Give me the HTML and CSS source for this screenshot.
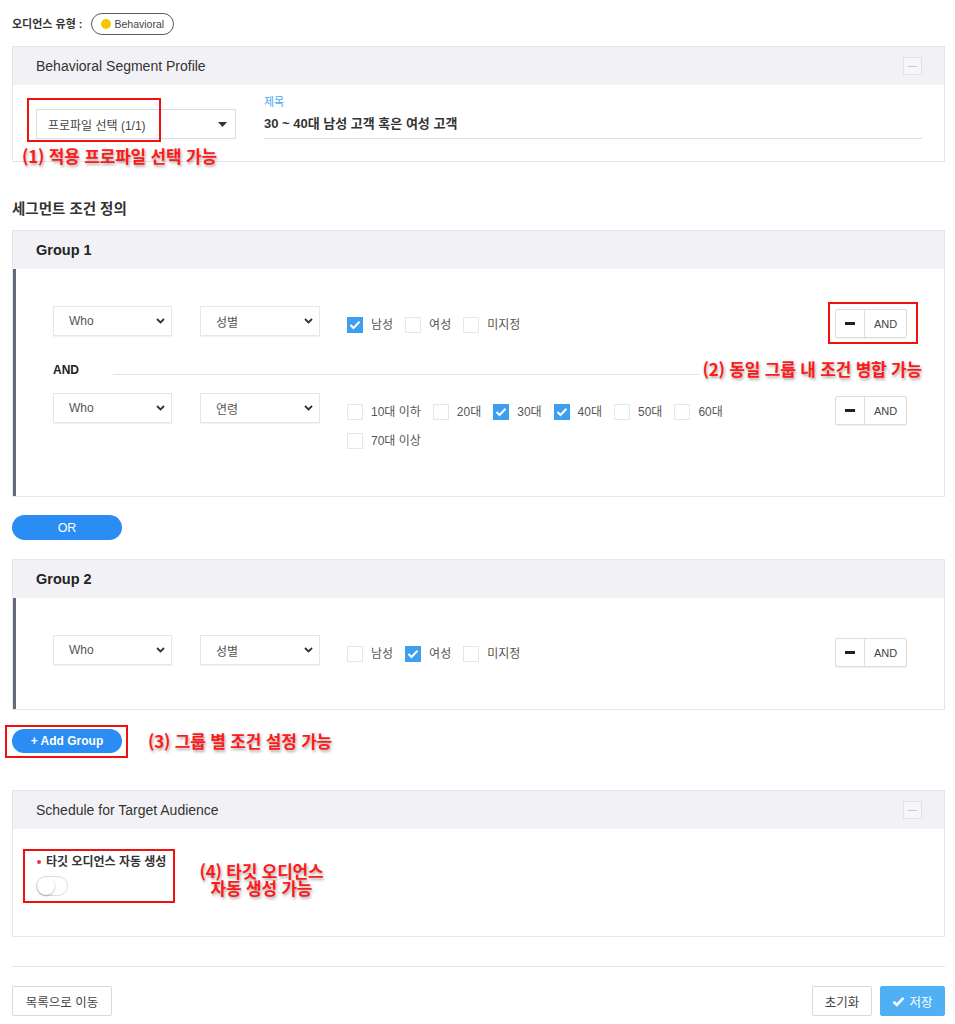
FILE: index.html
```html
<!DOCTYPE html>
<html lang="ko">
<head>
<meta charset="utf-8">
<title>Behavioral Segment</title>
<link rel="stylesheet" href="styles.css">
</head>
<body>
<div class="page">
  <div class="type-row">
    <span class="type-label">오디언스 유형 :</span>
    <span class="badge"><span class="badge-dot"></span>Behavioral</span>
  </div>

  <section class="card profile-card">
    <header class="card-head">
      <span class="card-title">Behavioral Segment Profile</span>
      <span class="collapse-btn"><span class="collapse-line"></span></span>
    </header>
    <div class="profile-body">
      <div class="profile-select">
        <span>프로파일 선택 (1/1)</span>
        <svg class="caret" width="9" height="5" viewBox="0 0 9 5"><path d="M0 0h9L4.5 5z" fill="#333"/></svg>
        <span class="hl hl-profile"></span>
      </div>
      <div class="title-field">
        <div class="field-label">제목</div>
        <div class="field-value">30 ~ 40대 남성 고객 혹은 여성 고객</div>
      </div>
      <div class="note note-1">(1) 적용 프로파일 선택 가능</div>
    </div>
  </section>

  <h2 class="section-title">세그먼트 조건 정의</h2>

  <section class="card group-card">
    <header class="card-head"><span class="group-title">Group 1</span></header>
    <div class="group-body">
      <div class="cond-row">
        <div class="sel sel-a"><span>Who</span><svg class="chev" width="9" height="6" viewBox="0 0 9 6"><path d="M1 1l3.5 3.5L8 1" fill="none" stroke="#333" stroke-width="1.8"/></svg></div>
        <div class="sel sel-b"><span>성별</span><svg class="chev" width="9" height="6" viewBox="0 0 9 6"><path d="M1 1l3.5 3.5L8 1" fill="none" stroke="#333" stroke-width="1.8"/></svg></div>
        <div class="checks">
          <span class="chk"><span class="box on"><svg width="12" height="10" viewBox="0 0 12 10"><path d="M1.5 5l3 3L10.5 1.8" fill="none" stroke="#fff" stroke-width="2"/></svg></span>남성</span>
          <span class="chk"><span class="box"></span>여성</span>
          <span class="chk"><span class="box"></span>미지정</span>
        </div>
        <div class="and-wrap">
          <div class="and-btn"><span class="and-minus"><i></i></span><span class="and-text">AND</span></div>
          <span class="hl hl-and"></span>
        </div>
      </div>
      <div class="and-sep"><span class="and-label">AND</span><span class="sep-line"></span></div>
      <div class="cond-row">
        <div class="sel sel-a"><span>Who</span><svg class="chev" width="9" height="6" viewBox="0 0 9 6"><path d="M1 1l3.5 3.5L8 1" fill="none" stroke="#333" stroke-width="1.8"/></svg></div>
        <div class="sel sel-b"><span>연령</span><svg class="chev" width="9" height="6" viewBox="0 0 9 6"><path d="M1 1l3.5 3.5L8 1" fill="none" stroke="#333" stroke-width="1.8"/></svg></div>
        <div class="checks">
          <span class="chk"><span class="box"></span>10대 이하</span>
          <span class="chk"><span class="box"></span>20대</span>
          <span class="chk"><span class="box on"><svg width="12" height="10" viewBox="0 0 12 10"><path d="M1.5 5l3 3L10.5 1.8" fill="none" stroke="#fff" stroke-width="2"/></svg></span>30대</span>
          <span class="chk"><span class="box on"><svg width="12" height="10" viewBox="0 0 12 10"><path d="M1.5 5l3 3L10.5 1.8" fill="none" stroke="#fff" stroke-width="2"/></svg></span>40대</span>
          <span class="chk"><span class="box"></span>50대</span>
          <span class="chk"><span class="box"></span>60대</span>
          <span class="chk"><span class="box"></span>70대 이상</span>
        </div>
        <div class="and-wrap">
          <div class="and-btn"><span class="and-minus"><i></i></span><span class="and-text">AND</span></div>
        </div>
      </div>
      <div class="note note-2">(2) 동일 그룹 내 조건 병합 가능</div>
    </div>
  </section>

  <div class="or-btn">OR</div>

  <section class="card group-card">
    <header class="card-head"><span class="group-title">Group 2</span></header>
    <div class="group-body group-body-2">
      <div class="cond-row">
        <div class="sel sel-a"><span>Who</span><svg class="chev" width="9" height="6" viewBox="0 0 9 6"><path d="M1 1l3.5 3.5L8 1" fill="none" stroke="#333" stroke-width="1.8"/></svg></div>
        <div class="sel sel-b"><span>성별</span><svg class="chev" width="9" height="6" viewBox="0 0 9 6"><path d="M1 1l3.5 3.5L8 1" fill="none" stroke="#333" stroke-width="1.8"/></svg></div>
        <div class="checks">
          <span class="chk"><span class="box"></span>남성</span>
          <span class="chk"><span class="box on"><svg width="12" height="10" viewBox="0 0 12 10"><path d="M1.5 5l3 3L10.5 1.8" fill="none" stroke="#fff" stroke-width="2"/></svg></span>여성</span>
          <span class="chk"><span class="box"></span>미지정</span>
        </div>
        <div class="and-wrap">
          <div class="and-btn"><span class="and-minus"><i></i></span><span class="and-text">AND</span></div>
        </div>
      </div>
    </div>
  </section>

  <div class="add-row">
    <div class="add-wrap">
      <div class="add-btn">+ Add Group</div>
      <span class="hl hl-add"></span>
    </div>
    <div class="note note-3">(3) 그룹 별 조건 설정 가능</div>
  </div>

  <section class="card sched-card">
    <header class="card-head">
      <span class="card-title">Schedule for Target Audience</span>
      <span class="collapse-btn"><span class="collapse-line"></span></span>
    </header>
    <div class="sched-body">
      <div class="auto-wrap">
        <div class="auto-label"><span class="req-dot"></span>타깃 오디언스 자동 생성</div>
        <div class="toggle"><span class="knob"></span></div>
        <span class="hl hl-auto"></span>
      </div>
      <div class="note note-4">(4) 타깃 오디언스<br>자동 생성 가능</div>
    </div>
  </section>

  <footer class="footer">
    <div class="btn btn-list">목록으로 이동</div>
    <div class="footer-right">
      <div class="btn btn-reset">초기화</div>
      <div class="btn btn-save"><svg width="13" height="11" viewBox="0 0 13 11"><path d="M1.5 5.8l3.4 3.2L11.5 1.8" fill="none" stroke="#fff" stroke-width="2.6"/></svg>저장</div>
    </div>
  </footer>
</div>
</body>
</html>
```

FILE: styles.css
```css
* { box-sizing: border-box; }
html, body { margin: 0; padding: 0; background: #fff; }
body {
  font-family: "Liberation Sans", "Noto Sans CJK KR", sans-serif;
  color: #333;
}
.page { width: 955px; padding: 13px 10px 0 12px; }

/* type row */
.type-row { display: flex; align-items: center; height: 22px; gap: 8px; }
.type-label { font-size: 11px; font-weight: bold; color: #333; line-height: 14px; }
.badge {
  display: flex; align-items: center; gap: 4px;
  width: 83px; height: 22px; padding-left: 9px;
  border: 1px solid #5a5a5a; border-radius: 11px;
  font-size: 10.5px; color: #444;
}
.badge-dot { width: 10px; height: 10px; border-radius: 50%; background: #f7c800; }

/* cards */
.card { border: 1px solid #e6e6ea; background: #fff; }
.profile-card { margin-top: 11px; }
.card-head {
  height: 38px; background: #f2f2f6;
  display: flex; align-items: center; justify-content: space-between;
  padding: 0 22px 0 23px;
}
.card-title { font-size: 14px; color: #333; }
.collapse-btn {
  width: 19px; height: 18px; border: 1px solid #e2e2e6; background: #f7f7f9;
  display: flex; align-items: center; justify-content: center;
}
.collapse-line { width: 9px; height: 1px; background: #c9c9cd; }

/* profile */
.profile-body {
  position: relative;
  display: flex; align-items: flex-start; gap: 28px;
  padding: 10px 22px 22px 23px;
}
.profile-select {
  position: relative;
  width: 200px; height: 30px; margin-top: 14px;
  border: 1px solid #dcdcdc;
  display: flex; align-items: center; justify-content: space-between;
  padding: 0 8px 0 11px;
  font-size: 12px; color: #444;
}
.title-field { flex: 1; }
.field-label { font-size: 11px; color: #4ea8ef; line-height: 14px; }
.field-value {
  height: 30px; line-height: 29px;
  font-size: 13px; font-weight: bold; color: #333;
  border-bottom: 1px solid #e0e0e0;
}

/* highlight boxes */
.hl { position: absolute; border: 2px solid #f01010; pointer-events: none; }
.hl-profile { left: -10px; top: -12px; width: 134px; height: 44px; }
.hl-and { left: -7px; top: -7px; width: 90px; height: 42px; }
.hl-add { left: -7px; top: -4px; width: 123px; height: 33px; }
.hl-auto { left: -13px; top: -6px; width: 152px; height: 54px; }

/* annotations */
.note {
  color: #ff1a1a;
  font-family: "Noto Sans CJK KR", sans-serif;
  font-size: 17px; font-weight: bold; line-height: 20px;
  letter-spacing: -0.2px;
  text-shadow: 1px 2px 3px rgba(0, 0, 0, 0.35);
  white-space: nowrap;
}
.note-1 { position: absolute; left: 9px; top: 61px; }
.note-2 { position: absolute; right: 22px; top: 90px; background: #fff; padding-left: 3px; }
.note-3 { margin-left: 26px; }
.note-4 { margin-left: 33px; margin-top: 7px; text-align: center; line-height: 17px; }

/* section title */
.section-title {
  margin: 37px 0 11px; font-size: 14.5px; font-weight: bold; line-height: 20px; color: #333;
}

/* groups */
.group-title { font-size: 14.5px; font-weight: bold; color: #222; }
.group-body {
  position: relative;
  border-left: 3px solid #636a7b;
  padding: 37px 37px 47px 37px;
}
.group-body-2 { padding-bottom: 42px; }
.cond-row { display: flex; align-items: flex-start; }
.sel {
  height: 30px; border: 1px solid #e6e6e6; background: #fff;
  box-shadow: 0 1px 1px rgba(0, 0, 0, 0.05);
  display: flex; align-items: center; justify-content: space-between;
  padding: 0 6px 0 15px;
  font-size: 12px; color: #555;
}
.sel-a { width: 119px; margin-right: 28px; }
.sel-b { width: 120px; margin-right: 27px; }
.checks {
  width: 400px; margin-top: 11px;
  display: flex; flex-wrap: wrap; column-gap: 12px; row-gap: 13px;
}
.chk {
  display: flex; align-items: center; gap: 8px;
  height: 16px; font-size: 12px; color: #555; line-height: 16px;
}
.box {
  width: 16px; height: 16px; border: 1px solid #e6e6e6; background: #fff;
  display: flex; align-items: center; justify-content: center;
}
.box.on { background: #3e9ff0; border-color: #3e9ff0; }
.and-wrap { position: relative; margin-left: auto; margin-top: 3px; }
.and-btn {
  display: flex; height: 29px;
  border: 1px solid #dcdcdc; border-radius: 2px; background: #fff;
  box-shadow: 0 1px 1px rgba(0, 0, 0, 0.06);
}
.and-minus {
  width: 29px; border-right: 1px solid #e0e0e0;
  display: flex; align-items: center; justify-content: center;
}
.and-minus i { display: block; width: 10px; height: 3px; background: #222; }
.and-text {
  width: 41px; display: flex; align-items: center; justify-content: center;
  font-size: 11px; color: #444;
}
.and-sep { display: flex; align-items: center; height: 55px; padding-top: 9px; }
.and-label { font-size: 12px; font-weight: bold; color: #222; }
.sep-line { flex: 1; height: 1px; background: #e4e4e4; margin-left: 34px; margin-top: 8px; }

/* pills */
.or-btn, .add-btn {
  width: 110px; border-radius: 13px; background: #2b8cf3; color: #fff;
  display: flex; align-items: center; justify-content: center;
}
.or-btn { height: 25px; margin: 18px 0 19px; font-size: 12.5px; }
.add-row { display: flex; align-items: center; margin-top: 19px; }
.add-wrap { position: relative; }
.add-btn { height: 24px; font-size: 12px; font-weight: bold; }

/* schedule */
.sched-card { margin-top: 37px; }
.sched-body { display: flex; align-items: flex-start; padding: 26px 22px 40px 23px; }
.auto-wrap { position: relative; }
.auto-label {
  display: flex; align-items: center;
  font-size: 12px; font-weight: bold; color: #333; line-height: 14px;
}
.req-dot { width: 4px; height: 4px; border-radius: 50%; background: #f0304a; margin: 0 5px 0 1px; }
.toggle {
  width: 32px; height: 20px; margin-top: 7px;
  border: 1px solid #dcdcdc; border-radius: 10px; background: #fff;
  display: flex; align-items: center;
}
.knob {
  width: 18px; height: 18px; border-radius: 50%; background: #fff;
  box-shadow: 0 1px 2px rgba(0, 0, 0, 0.3);
}

/* footer */
.footer {
  margin-top: 29px; border-top: 1px solid #e4e4e4; padding-top: 19px;
  display: flex; justify-content: space-between;
}
.footer-right { display: flex; gap: 8px; }
.btn {
  height: 30px; border: 1px solid #d9d9d9; border-radius: 2px; background: #fff;
  display: flex; align-items: center; justify-content: center;
  font-size: 12.5px; color: #444;
  box-shadow: 0 1px 1px rgba(0, 0, 0, 0.04);
}
.btn-list { width: 100px; }
.btn-reset { width: 60px; }
.btn-save { width: 65px; background: #50b0f5; border-color: #50b0f5; color: #fff; gap: 4px; }
```
